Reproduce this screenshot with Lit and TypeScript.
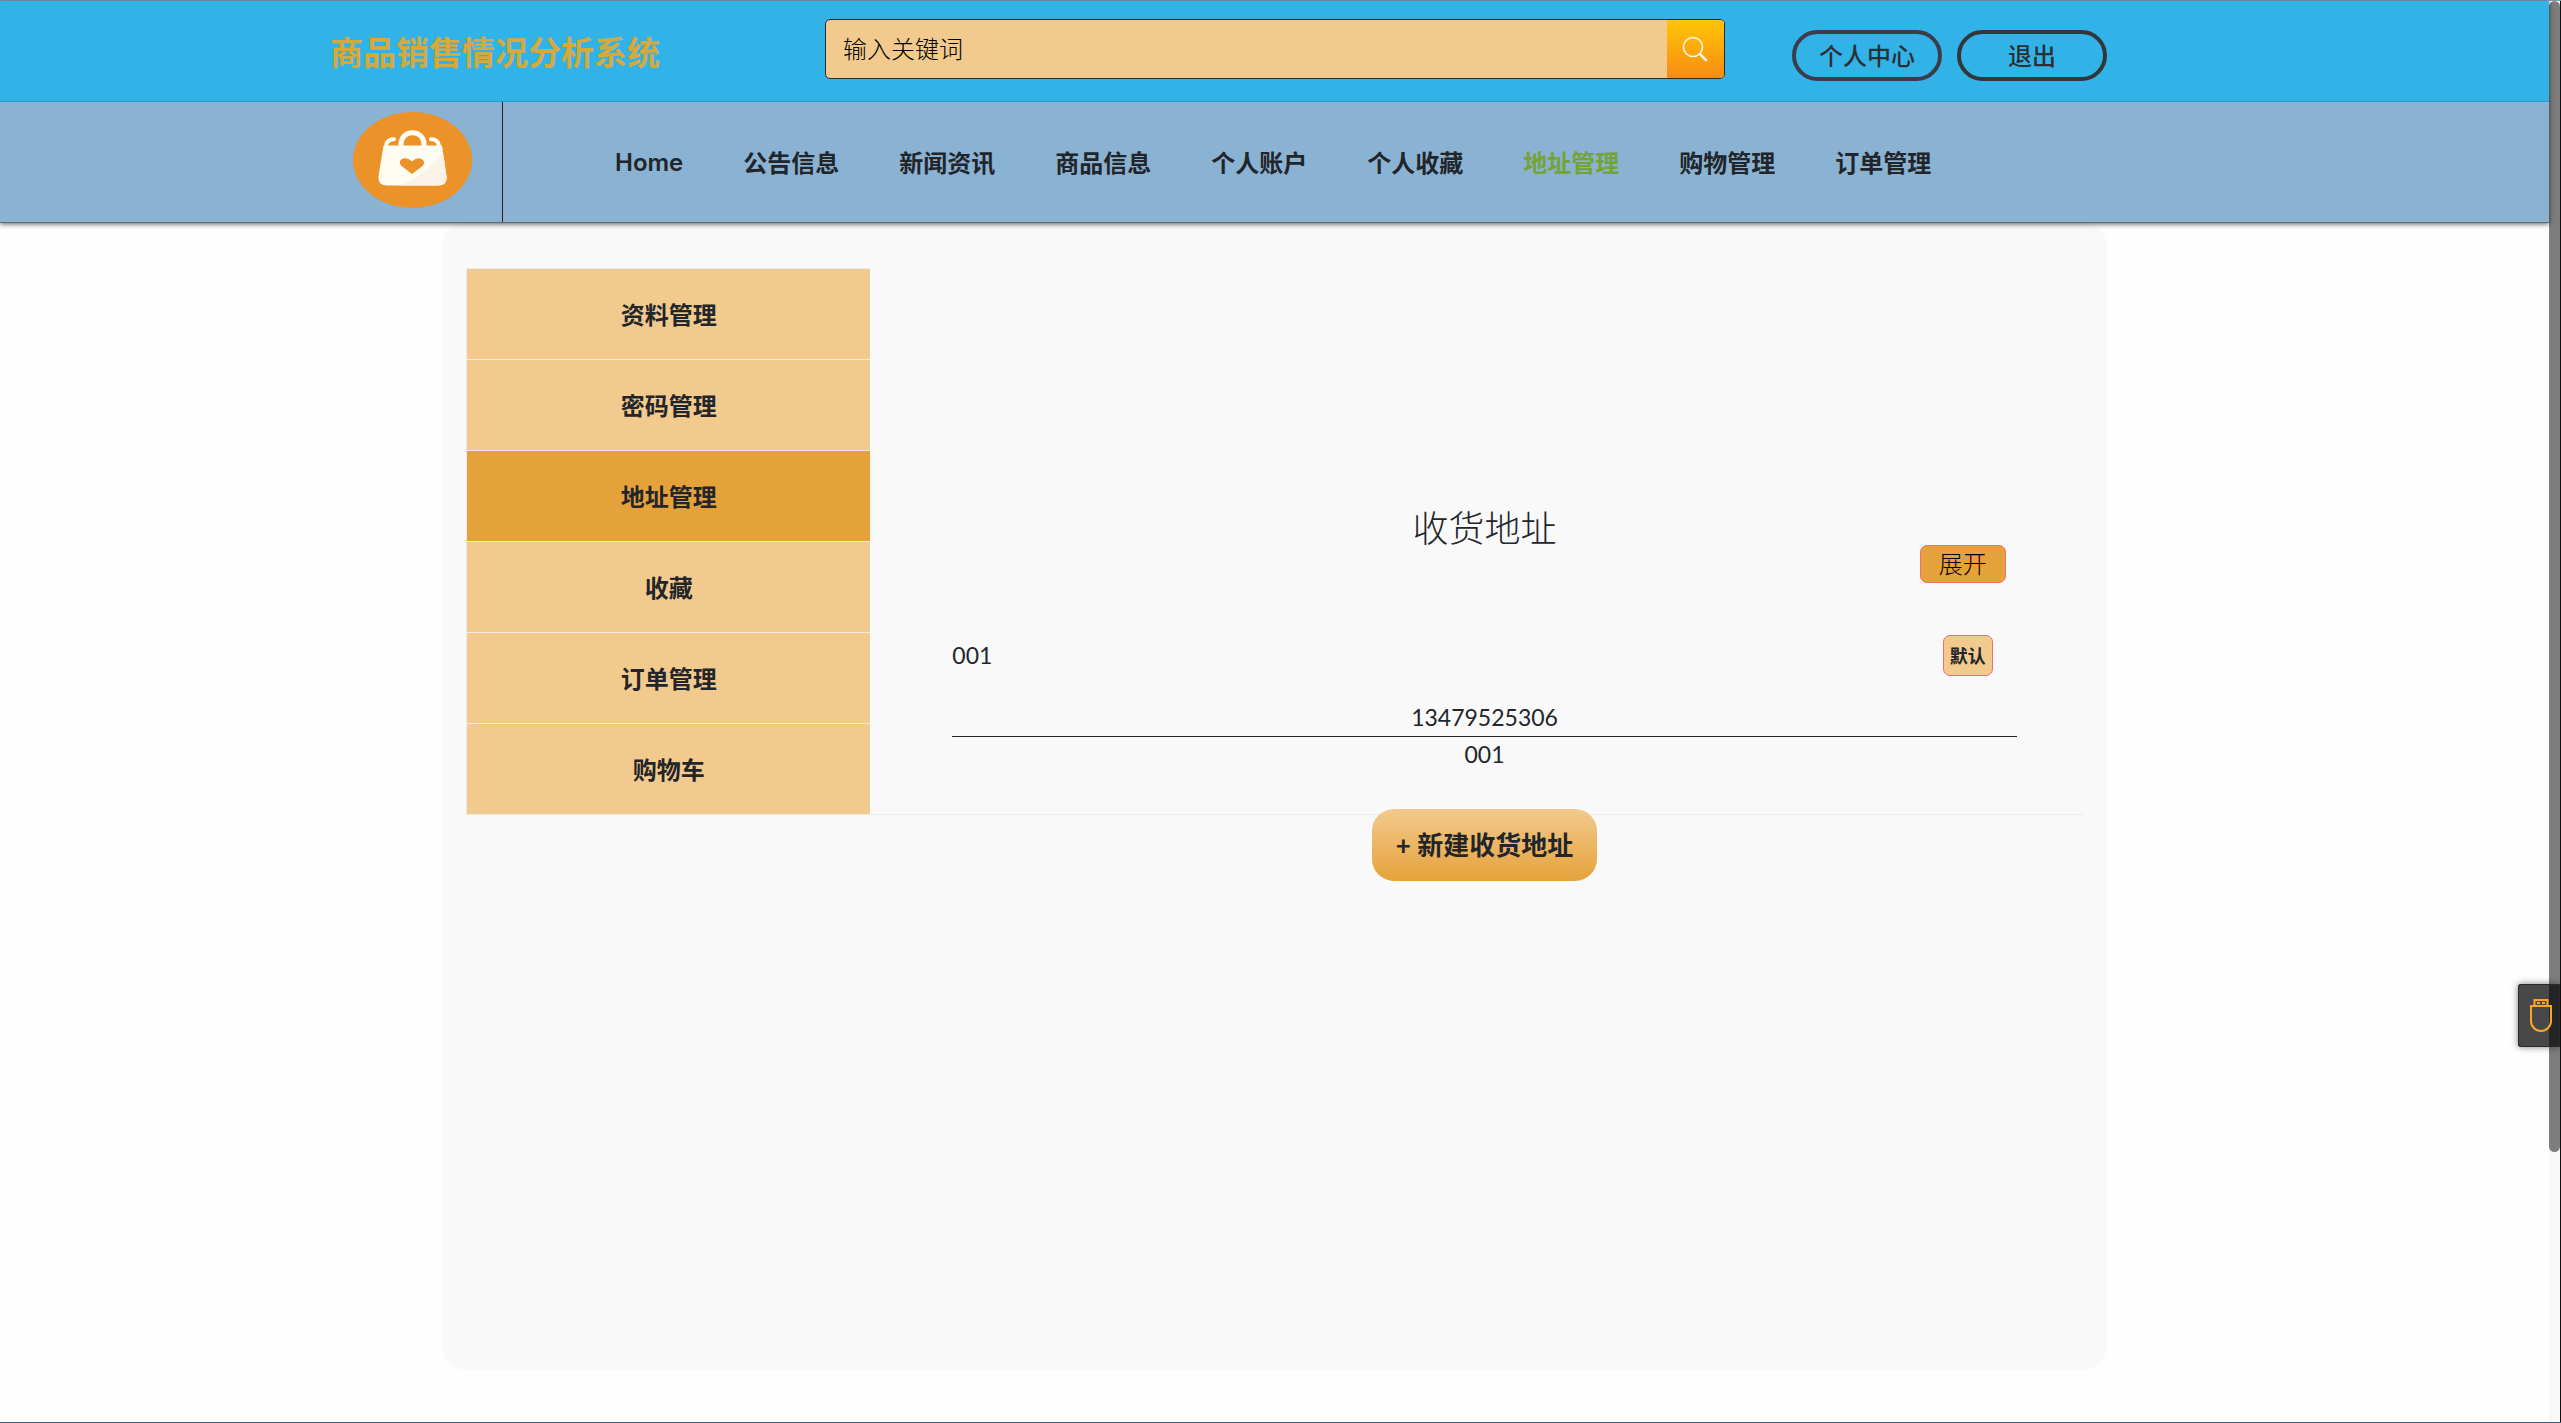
import { LitElement, html, css } from "lit";
import { customElement, state } from "lit/decorators.js";
import { classMap } from "lit/directives/class-map.js";

const NAV = ["Home", "公告信息", "新闻资讯", "商品信息", "个人账户", "个人收藏", "地址管理", "购物管理", "订单管理"];
const MENU = ["资料管理", "密码管理", "地址管理", "收藏", "订单管理", "购物车"];

@customElement("app-root")
export class AppRoot extends LitElement {
  @state() private current = "地址管理";

  static styles = css`
    :host {
      display: flex;
      min-height: 100vh;
      box-sizing: border-box;
      border-top: 1px solid #7c98ab;
      border-bottom: 1px solid #3d5c80;
      background: #fefefe;
      color: #222529;
      font-family: Lato, "Noto Sans CJK SC", sans-serif;
      font-size: 24px;
      font-weight: 400;
      line-height: 36px;
    }
    *, *::before, *::after { box-sizing: border-box; }
    button, input { font: inherit; color: inherit; margin: 0; }
    button { cursor: pointer; }
    a { color: inherit; text-decoration: none; }
    ul { list-style: none; margin: 0; padding: 0; }

    .page { flex: 1; min-width: 0; }
    .header {
      position: relative;
      z-index: 1;
      box-shadow: 0 1px 0 #696b6e, 0 2px 5px rgba(0, 0, 0, 0.65);
    }
    .top {
      display: flex;
      align-items: flex-start;
      height: 101px;
      padding: 0 442px 0 330px;
      background: #31b3e8;
      border-bottom: 1px solid #2f98ca;
    }
    .title {
      flex: 0 0 495px;
      margin: 0;
      padding-top: 33px;
      color: #d5a93c;
      font-size: 33px;
      font-weight: 700;
      line-height: 36px;
    }
    .search {
      flex: 1;
      display: flex;
      height: 60px;
      margin-top: 18px;
      border: 1px solid #2b2b2b;
      border-radius: 5px;
      background: #f2ca8d;
      overflow: hidden;
    }
    .search-input {
      flex: 1;
      min-width: 0;
      padding: 0 17px;
      border: 0;
      outline: 0;
      background: transparent;
      font-weight: 300;
    }
    .search-input::placeholder { color: #000; opacity: 1; }
    .search-button {
      display: grid;
      place-items: center;
      width: 57px;
      padding: 0;
      border: 0;
      background: linear-gradient(#ffc506, #f88b14);
    }
    .account {
      display: flex;
      gap: 15px;
      margin: 29px 0 0 67px;
    }
    .pill {
      width: 150px;
      height: 51px;
      padding: 0;
      border: 4px solid #35363b;
      border-radius: 26px;
      background: transparent;
      color: #2b2f33;
      font-weight: 500;
    }
    .pill.accent { border-color: #3d3c4b; }

    .nav {
      display: flex;
      height: 120px;
      padding-left: 352px;
      background: #89b2d3;
    }
    .brand {
      width: 151px;
      padding-top: 10px;
      border-right: 1px solid #222;
    }
    .brand svg { display: block; }
    .links {
      display: flex;
      gap: 60px;
      align-items: center;
      padding: 2px 0 0 112px;
      font-weight: 700;
    }
    .link.active { color: #74a337; }
    .latin { font-family: Inter, sans-serif; font-weight: 600; }

    .panel {
      width: 65.3%;
      min-height: calc(100vh - 275px);
      margin: 0 auto;
      padding: 46px 24px 0;
      border-radius: 24px;
      background: #f9f9f9;
    }
    .board {
      display: flex;
      align-items: flex-start;
      border-bottom: 1px solid #ececec;
    }
    .menu {
      width: 25%;
      border: solid #ececec;
      border-width: 1px 0 0 1px;
      text-align: center;
      font-weight: 700;
    }
    .menu-item + .menu-item { border-top: 1px solid #f0ece4; }
    .menu-link {
      display: block;
      height: 90px;
      line-height: 92px;
      background: #f2ca8d;
    }
    .menu-link.active { background: #e5a23b; }

    .address {
      flex: 1;
      display: flex;
      flex-direction: column;
      align-items: center;
      margin-bottom: -72px;
      padding: 243px 66px 0 82px;
    }
    .heading {
      margin: 0;
      font-size: 36px;
      font-weight: 300;
      line-height: 34px;
    }
    .expand {
      align-self: flex-end;
      width: 86px;
      height: 38px;
      margin-right: 11px;
      padding: 0;
      border: 1px solid #f56c6c;
      border-radius: 7px;
      background: #e5a23b;
      color: #000;
      font-weight: 300;
    }
    .row {
      align-self: stretch;
      display: flex;
      justify-content: space-between;
      align-items: center;
      margin-top: 52px;
      padding-right: 24px;
    }
    .value {
      padding-bottom: 2px;
      font-size: 23px;
      line-height: 34px;
    }
    .default {
      width: 50px;
      height: 41px;
      padding: 0;
      border: 1px solid #f56c6c;
      border-radius: 7px;
      background: #f2ca8d;
      font-size: 18px;
      font-weight: 700;
    }
    .phone {
      align-self: stretch;
      margin-top: 24px;
      border-bottom: 1px solid #222529;
      text-align: center;
    }
    .create {
      width: 225px;
      height: 72px;
      margin-top: 36px;
      padding: 0;
      border: 0;
      border-radius: 22px;
      background: linear-gradient(#f2ca8d, #e5a23b);
      font-size: 26px;
      font-weight: 700;
      white-space: nowrap;
    }

    .rail { width: 11px; background: #f8f8f8; }
    .thumb { height: 81%; border-radius: 6px; background: #7d7d7d; }
    .edge { width: 1px; background: #111; }

    .dock {
      position: fixed;
      z-index: 2;
      top: 984px;
      right: 1px;
      width: 42px;
      height: 63px;
      padding: 0 0 0 12px;
      border: 0;
      border-radius: 3px 0 0 3px;
      background: linear-gradient(90deg, #484848 31px, #242424 31px);
      box-shadow: 0 0 7px rgba(0, 0, 0, 0.5), inset 0 0 0 1px #2b2b2b;
    }
    .dock svg { display: block; }
  `;

  render() {
    return html`
      <div class="page">
        <header class="header">
          <div class="top">
            <h1 class="title">商品销售情况分析系统</h1>
            <form class="search" role="search" @submit=${(e: Event) => e.preventDefault()}>
              <input class="search-input" type="text" aria-label="输入关键词" placeholder="输入关键词" />
              <button class="search-button" type="submit" aria-label="搜索">
                <svg width="28" height="28" viewBox="0 0 28 28" fill="none" stroke="#fff8e8" stroke-linecap="round">
                  <circle cx="11" cy="12" r="9.5" stroke-width="1.5" />
                  <path d="M18 19.2L24 25.2" stroke-width="2.6" />
                </svg>
              </button>
            </form>
            <div class="account">
              <button class="pill accent" type="button">个人中心</button>
              <button class="pill" type="button">退出</button>
            </div>
          </div>
          <nav class="nav">
            <a class="brand" href="#home" aria-label="Home">
              <svg width="120" height="96" viewBox="0 0 120 96">
                <ellipse cx="60.500" cy="48" rx="59.500" ry="48" fill="#eb9228" />
                <g fill="none" stroke="#fffcf3" stroke-linecap="round">
                  <path d="M49 36V32C49 17 72 17 72 32V36" stroke-width="5" />
                  <path d="M33.500 38C34 31 35.500 27 42 27.200M87.500 38C87 31 85.500 27 79 27.200" stroke-width="4" />
                </g>
                <path d="M31.500 33.500H90L94.500 64Q95.500 73.500 85.500 73.500H35.500Q25.500 73.500 26.500 64Z" fill="#fffcf3" />
                <path d="M91 41L94.500 64Q95.500 73.500 85.500 73.500H47.500Q74.500 63 91 41Z" fill="#fbf2e7" />
                <path d="M60 62L49.500 54Q46 50 49.500 47.200Q54.500 44.500 60 49.500Q65.500 44.500 70 47.200Q74 50 70.500 54Z" fill="#eb9228" />
              </svg>
            </a>
            <div class="links">
              ${NAV.map((n) => html`<a class=${classMap({ link: true, active: n === "地址管理", latin: n === "Home" })} href="#${n}">${n}</a>`)}
            </div>
          </nav>
        </header>
        <main class="panel">
          <div class="board">
            <ul class="menu">
              ${MENU.map((m) => html`
                <li class="menu-item">
                  <a class=${classMap({ "menu-link": true, active: m === this.current })} href="#${m}"
                    @click=${() => { this.current = m; }}>${m}</a>
                </li>`)}
            </ul>
            <section class="address">
              <h2 class="heading">收货地址</h2>
              <button class="expand" type="button">展开</button>
              <div class="row">
                <span class="value">001</span>
                <button class="default" type="button">默认</button>
              </div>
              <div class="value phone">13479525306</div>
              <div class="value">001</div>
              <button class="create" type="button">+ 新建收货地址</button>
            </section>
          </div>
        </main>
      </div>
      <div class="rail"><div class="thumb"></div></div>
      <div class="edge"></div>
      <button class="dock" type="button" aria-label="工具">
        <svg width="22" height="34" viewBox="0 0 22 34" fill="none" stroke="#f9a62a" stroke-width="2">
          <path d="M1 7H21V22A10 10 0 0 1 1 22Z" />
          <path d="M4.500 7V1H17.500V7" />
          <path d="M7 4H10M12 4H15" />
        </svg>
      </button>
    `;
  }
}
